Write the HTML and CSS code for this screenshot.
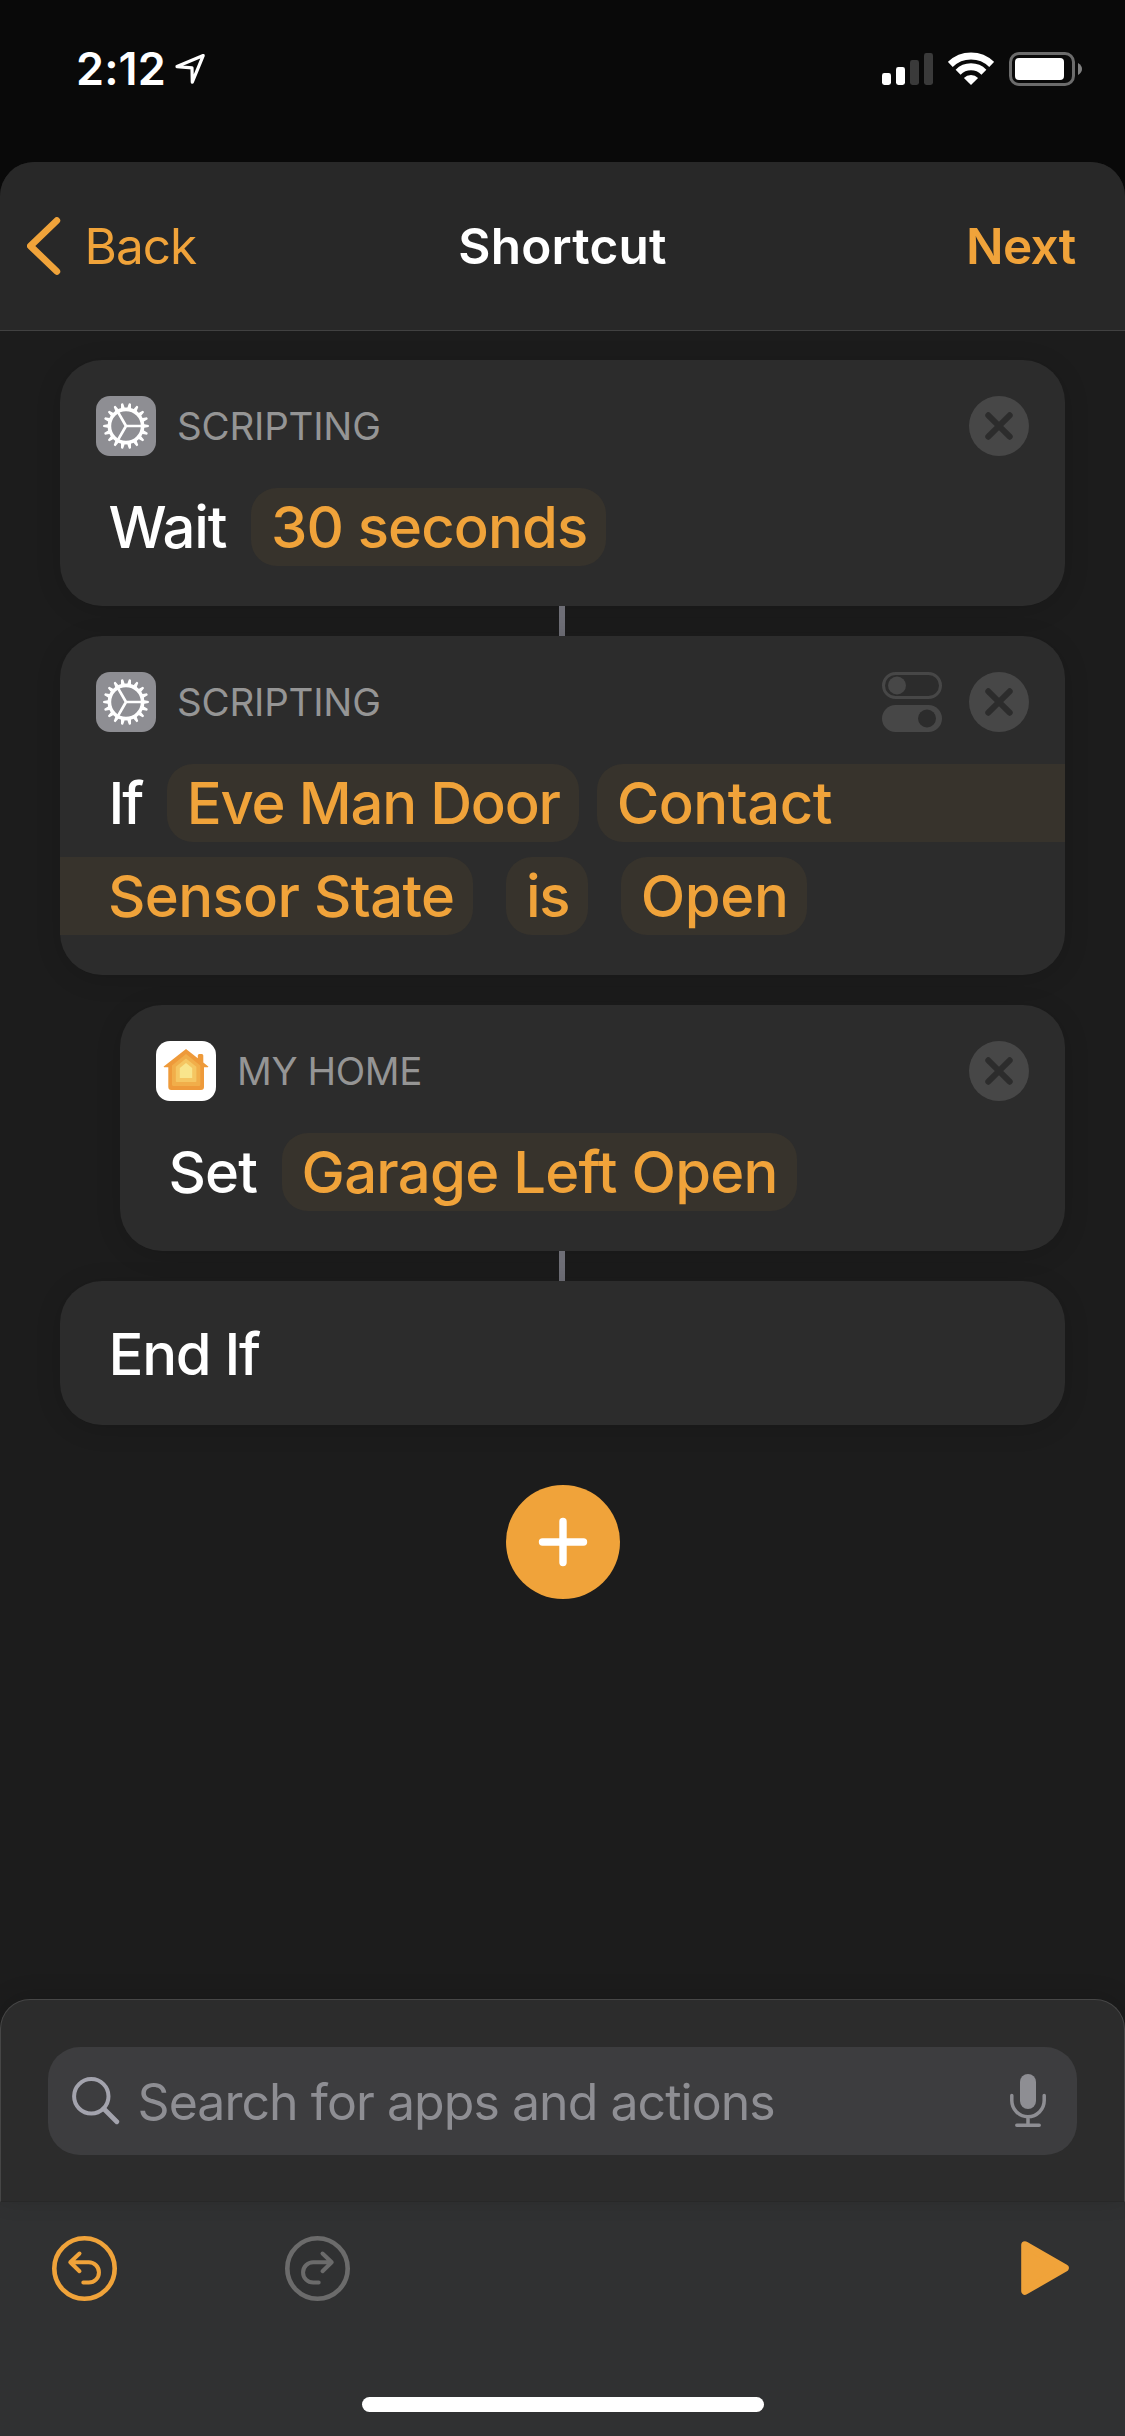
FILE: index.html
```html
<!DOCTYPE html>
<html lang="en">
<head>
<meta charset="utf-8">
<title>Shortcut</title>
<link rel="stylesheet" href="styles.css">
</head>
<body>
<svg class="defs" aria-hidden="true">
  <defs>
    <g id="teeth"><path d="M17 -2.1L22.6 -1.1Q23.4 0 22.6 1.1L17 2.1Z M-17 -2.1L-22.6 -1.1Q-23.4 0 -22.6 1.1L-17 2.1Z"/></g>
    <symbol id="gear" viewBox="0 0 60 60">
      <g transform="translate(30 30)" fill="#fff">
        <use href="#teeth"/>
        <use href="#teeth" transform="rotate(20)"/>
        <use href="#teeth" transform="rotate(40)"/>
        <use href="#teeth" transform="rotate(60)"/>
        <use href="#teeth" transform="rotate(80)"/>
        <use href="#teeth" transform="rotate(100)"/>
        <use href="#teeth" transform="rotate(120)"/>
        <use href="#teeth" transform="rotate(140)"/>
        <use href="#teeth" transform="rotate(160)"/>
        <circle r="16.6" fill="none" stroke="#fff" stroke-width="3.6"/>
        <path d="M0 0H16 M0 0L-8 -13.9 M0 0L-8 13.9" stroke="#fff" stroke-width="2.7"/>
      </g>
    </symbol>
    <symbol id="close" viewBox="0 0 60 60">
      <circle cx="30" cy="30" r="30" fill="#474747"/>
      <path d="M19.3 19.3L40.7 40.7M40.7 19.3L19.3 40.7" stroke="#2c2c2c" stroke-width="6" stroke-linecap="round"/>
    </symbol>
  </defs>
</svg>

<header class="status">
  <div class="clock">
    <span class="time">2:12</span>
    <svg class="location" width="32" height="32" viewBox="0 0 32 32"><path d="M29.2 2.6L3 13.6L18 14.9L18.3 29.2Z" fill="none" stroke="#fff" stroke-width="3.2" stroke-linejoin="round"/></svg>
  </div>
  <div class="indicators">
    <svg width="51" height="34" viewBox="0 0 51 34"><g fill="#fff"><rect x="0" y="21" width="9" height="12" rx="2.4"/><rect x="14" y="15" width="9" height="18" rx="2.4"/></g><g fill="#3a3a3a"><rect x="28" y="8" width="9" height="25" rx="2.4"/><rect x="42" y="1" width="9" height="32" rx="2.4"/></g></svg>
    <svg width="46" height="34" viewBox="0 0 46 34"><g fill="none" stroke="#fff" stroke-width="7"><path d="M2.3 12.4A29.5 29.5 0 0 1 43.7 12.4"/><path d="M10.1 20.2A18.2 18.2 0 0 1 35.9 20.2"/></g><path d="M23 33L15.9 25.9A10 10 0 0 1 30.1 25.9Z" fill="#fff"/></svg>
    <svg width="74" height="34" viewBox="0 0 74 34"><rect x="1.5" y="1.5" width="63" height="31" rx="8.5" fill="none" stroke="#6c6c6c" stroke-width="3"/><rect x="6" y="6" width="49" height="22" rx="4" fill="#fff"/><path d="M69 11Q73 13.5 73 17T69 23Z" fill="#808080"/></svg>
  </div>
</header>

<main class="sheet">
  <nav class="nav">
    <a class="back"><svg width="34" height="58" viewBox="0 0 34 58"><path d="M29.8 3.6L3.4 29L29.8 54.4" fill="none" stroke="#f0a33a" stroke-width="6.8" stroke-linecap="round" stroke-linejoin="round"/></svg><span>Back</span></a>
    <h1 class="title">Shortcut</h1>
    <a class="next">Next</a>
  </nav>

  <section class="actions">
    <article class="card">
      <div class="card-head">
        <span class="app scripting"><svg width="60" height="60"><use href="#gear"/></svg></span>
        <span class="caption">SCRIPTING</span>
        <svg width="60" height="60"><use href="#close"/></svg>
      </div>
      <div class="line"><span class="word ls-wait">Wait</span><span class="chip ls-seconds">30 seconds</span></div>
    </article>
    <div class="link"></div>
    <article class="card">
      <div class="card-head">
        <span class="app scripting"><svg width="60" height="60"><use href="#gear"/></svg></span>
        <span class="caption">SCRIPTING</span>
        <svg width="60" height="60" viewBox="0 0 60 60"><rect x="1.5" y="1.5" width="57" height="24" rx="12" fill="none" stroke="#474747" stroke-width="3"/><circle cx="15" cy="13.5" r="9" fill="#474747"/><rect y="33" width="60" height="27" rx="13.5" fill="#474747"/><circle cx="45" cy="46.5" r="9" fill="#2c2c2c"/></svg>
        <svg width="60" height="60"><use href="#close"/></svg>
      </div>
      <div class="line"><span class="word ls-if">If</span><span class="chip ls-door">Eve Man Door</span><span class="chip opens ls-contact">Contact</span></div>
      <div class="line wrapped"><span class="chip closes ls-sensor">Sensor State</span><span class="chip ls-is">is</span><span class="chip ls-open">Open</span></div>
    </article>
    <div class="gap"></div>
    <article class="card nested">
      <div class="card-head">
        <span class="app home"><svg width="60" height="60" viewBox="0 0 60 60"><path d="M30 8L41.8 17.2V14.5Q41.8 13 43.3 13H45.8Q47.3 13 47.3 14.5V21.6L52.3 25.6Q52.5 26.2 51.8 26.3H48V46Q48 49 45 49H15.3Q12.3 49 12.3 46V26.3H8.2Q7.5 26.2 7.7 25.6Z" fill="#ee9a3a"/><path d="M30 13L44.3 24.5V43.5Q44.3 45 42.8 45H17.5Q16 45 16 43.5V24.5Z" fill="#f1ae4a"/><path d="M30 17.5L40.4 25.8V40.2Q40.4 41 39.6 41H20.6Q19.8 41 19.8 40.2V25.8Z" fill="#f5c662"/><path d="M30 22L36.2 27V37H23.8V27Z" fill="#f9e58c"/></svg></span>
        <span class="caption my-home">MY HOME</span>
        <svg width="60" height="60"><use href="#close"/></svg>
      </div>
      <div class="line"><span class="word ls-set">Set</span><span class="chip ls-garage">Garage Left Open</span></div>
    </article>
    <div class="link"></div>
    <article class="card end"><span class="word ls-end">End If</span></article>
    <button class="add"><svg width="114" height="114" viewBox="0 0 114 114"><path d="M57 36.5V77.5M36.5 57H77.5" stroke="#fff" stroke-width="7.4" stroke-linecap="round"/></svg></button>
  </section>
</main>

<section class="drawer">
  <div class="search">
    <svg width="48" height="48" viewBox="0 0 48 48"><circle cx="19.3" cy="19.3" r="17.2" fill="none" stroke="#a3a3ad" stroke-width="4"/><path d="M31.8 31.8L44.8 44.8" stroke="#a3a3ad" stroke-width="4.8" stroke-linecap="round"/></svg>
    <span class="placeholder">Search for apps and actions</span>
    <svg width="36" height="54" viewBox="0 0 36 54"><rect x="10" y="0" width="16" height="35" rx="8" fill="#8e8e93"/><path d="M1.8 21.5V26.5A16.2 16.2 0 0 0 34.2 26.5V21.5M18 42.7V50M6.8 51.3H29.2" fill="none" stroke="#8e8e93" stroke-width="3.5" stroke-linecap="round"/></svg>
  </div>
</section>

<footer class="toolbar">
  <div class="tools">
    <svg width="65" height="65" viewBox="0 0 65 65" fill="none" stroke="#f0a33a" stroke-linecap="round" stroke-linejoin="round"><circle cx="32.5" cy="32.5" r="30.2" stroke-width="4.6"/><path d="M27.5 17.5L18.3 26.3L27.5 35.2M18.3 26.3H36.8A10.1 10.1 0 0 1 36.8 46.6H31.3" stroke-width="4"/></svg>
    <svg width="65" height="65" viewBox="0 0 65 65" fill="none" stroke="#6b6b6b" stroke-linecap="round" stroke-linejoin="round"><circle cx="32.5" cy="32.5" r="30.2" stroke-width="4.6"/><path d="M37.5 17.5L46.7 26.3L37.5 35.2M46.7 26.3H28.2A10.1 10.1 0 0 0 28.2 46.6H33.7" stroke-width="4"/></svg>
    <svg class="play" width="48" height="54" viewBox="0 0 48 54"><path d="M4 4L44 27L4 50Z" fill="#f0a33a" stroke="#f0a33a" stroke-width="7.6" stroke-linejoin="round"/></svg>
  </div>
  <div class="home-indicator"></div>
</footer>
</body>
</html>
```

FILE: styles.css
```css
* { box-sizing: border-box; margin: 0; padding: 0; }

body {
  width: 1125px;
  height: 2436px;
  overflow: hidden;
  display: flex;
  flex-direction: column;
  background: #090909;
  color: #fff;
  font-family: Inter, "Liberation Sans", sans-serif;
}

svg { display: block; flex: none; }
.defs { position: absolute; width: 0; height: 0; }

/* Status bar */
.status {
  flex: none;
  height: 162px;
  padding: 52px 42px 0 76px;
  display: flex;
  justify-content: space-between;
  align-items: flex-start;
}
.clock { display: flex; align-items: flex-start; }
.time {
  width: 98px;
  font-size: 45px;
  font-weight: 600;
  line-height: 34px;
  letter-spacing: .1px;
}
.location { margin-top: 1px; }
.indicators { display: flex; gap: 15px; }

/* Sheet: runs on behind the drawer's rounded corners */
.sheet {
  flex: none;
  height: 1871px;
  background: #1c1c1c;
  border-radius: 34px 34px 0 0;
  overflow: hidden;
}
.nav {
  height: 169px;
  padding: 0 49.5px;
  display: grid;
  grid-template-columns: 1fr auto 1fr;
  align-items: center;
  background: #282828;
  border-bottom: 1px solid #414141;
  font-size: 49.5px;
  line-height: 60px;
}
.back {
  margin-left: -23px;
  display: flex;
  align-items: center;
  gap: 24px;
  color: #f0a33a;
  letter-spacing: -1px;
}
.title { font-size: inherit; font-weight: 600; letter-spacing: .2px; }
.next { justify-self: end; color: #f0a33a; font-weight: 600; letter-spacing: -.7px; }

/* Actions */
.actions {
  padding: 29px 60px 0;
  display: flex;
  flex-direction: column;
}
.card {
  padding: 36px 0 40.5px;
  background: #2c2c2c;
  border-radius: 42px;
  box-shadow: 0 4px 26px rgba(0, 0, 10, .14);
}
.nested { margin-left: 60px; }
.card-head {
  height: 60px;
  padding: 0 36px;
  display: flex;
  align-items: center;
  gap: 27px;
}
.app { width: 60px; height: 60px; border-radius: 14px; overflow: hidden; }
.scripting { background: #8e8e93; }
.home { background: #fff; }
.caption {
  flex: 1;
  margin-left: -6px;
  color: #959595;
  font-size: 38.5px;
  line-height: 60px;
  letter-spacing: -.2px;
}
.my-home { letter-spacing: -.4px; }
.line {
  margin-top: 32px;
  padding-left: 48.5px;
  display: flex;
  gap: 25px;
}
.word, .chip {
  padding-top: 2px;
  font-size: 58px;
  font-weight: 500;
  line-height: 75.5px;
  white-space: nowrap;
}
.chip {
  padding-left: 19.5px;
  padding-right: 19px;
  color: #f0a33a;
  background: #37332c;
  border-radius: 26px;
}
.opens { flex: 1; margin-left: -6.5px; border-radius: 26px 0 0 26px; }
.wrapped { margin-top: 15.5px; padding-left: 0; gap: 33px; }
.closes { padding-left: 48px; border-radius: 0 26px 26px 0; }
.link { width: 6px; height: 30px; margin-left: 499px; background: #6e6e76; }
.gap { height: 30px; }
.end { height: 144px; padding: 33.5px 0 0 48.5px; display: flex; align-items: flex-start; }

/* Tracking per label */
.ls-wait { letter-spacing: -1.1px; }
.ls-seconds { letter-spacing: -.87px; }
.ls-if { letter-spacing: -2px; }
.ls-door { letter-spacing: -1.2px; }
.ls-contact { letter-spacing: -.5px; }
.ls-sensor { letter-spacing: -.65px; }
.ls-is { letter-spacing: -1.3px; }
.ls-open { letter-spacing: -.4px; }
.ls-set { letter-spacing: -.9px; }
.ls-garage { letter-spacing: -.75px; }
.ls-end { letter-spacing: -1.3px; }

.add {
  width: 114px;
  height: 114px;
  margin: 60px 0 0 445.5px;
  border: 0;
  border-radius: 50%;
  background: #f0a33a;
}

/* Search drawer */
.drawer {
  flex: none;
  height: 203px;
  margin-top: -34px;
  padding: 47px 47px 0;
  background: #2c2c2c;
  border: 1px solid #464646;
  border-bottom-color: #282828;
  border-radius: 30px 30px 0 0;
  box-shadow: 0 -3px 24px rgba(0, 0, 0, .14);
  position: relative;
}
.search {
  height: 108px;
  padding: 0 31px 0 24px;
  display: flex;
  align-items: center;
  background: #3d3d3f;
  border-radius: 32px;
}
.placeholder {
  flex: 1;
  margin-left: 17.5px;
  padding-top: 1px;
  color: #8e8e93;
  font-size: 50px;
  line-height: 60px;
  letter-spacing: -.95px;
}

/* Bottom toolbar */
.toolbar {
  flex: 1;
  background: #303132;
}
.tools {
  height: 195px;
  padding: 34px 56px 0 52px;
  display: flex;
  align-items: flex-start;
  gap: 168px;
}
.play { margin: 5px 0 0 auto; }
.home-indicator {
  width: 402px;
  height: 15px;
  margin: 0 auto;
  border-radius: 8px;
  background: #fff;
}
```
